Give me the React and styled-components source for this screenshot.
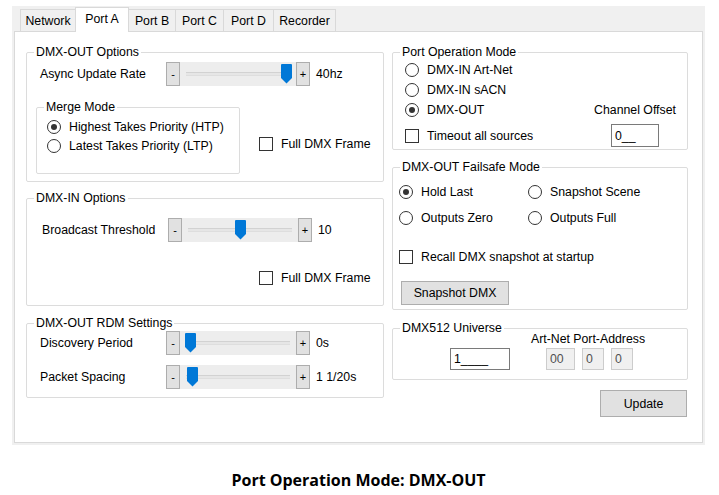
import React from 'react';
import styled, { createGlobalStyle } from 'styled-components';

const UI_FONT = '"Liberation Sans", Arial, sans-serif';
const GROUP_BORDER = '#dcdcdc';

const GlobalStyle = createGlobalStyle`
  body {
    margin: 0;
    background: #fff;
    font-family: ${UI_FONT};
  }
`;

const Root = styled.div`
  width: 719px;
  height: 495px;
  padding: 6px 0 0 12px;
  box-sizing: border-box;
  overflow: hidden;
`;

const Window = styled.div`
  width: 693px;
  height: 439px;
  background: #f0f0f0;
  padding: 0 2px 2px 2px;
  box-sizing: border-box;
  display: flex;
  flex-direction: column;
  font-size: 12.3px;
  color: #000;
`;

const TabStrip = styled.div`
  height: 25px;
  display: flex;
  align-items: flex-end;
  padding-left: 6px;
`;

const Tab = styled.div`
  width: ${(p) => p.$w}px;
  height: ${(p) => (p.$active ? 25 : 22)}px;
  box-sizing: border-box;
  padding-bottom: ${(p) => (p.$active ? 2 : 0)}px;
  margin-left: ${(p) => (p.$first ? 0 : -1)}px;
  margin-bottom: ${(p) => (p.$active ? -1 : 0)}px;
  display: flex;
  align-items: center;
  justify-content: center;
  background: ${(p) => (p.$active ? '#fff' : '#f0f0f0')};
  border: 1px solid #d9d9d9;
  border-bottom: none;
  position: relative;
  z-index: ${(p) => (p.$active ? 2 : 1)};
  white-space: nowrap;
`;

const TabPage = styled.div`
  flex: 1;
  background: #fff;
  border: 1px solid #d9d9d9;
  padding: 13px 0 0 11px;
  display: grid;
  grid-template-columns: 358px 296px;
  column-gap: 8px;
  align-items: start;
`;

const Column = styled.div`
  display: flex;
  flex-direction: column;
`;

const GroupBox = styled.fieldset`
  margin: ${(p) => p.$mt || 0}px 0 0 ${(p) => p.$ml || 0}px;
  padding: 0;
  min-width: 0;
  width: ${(p) => (p.$w ? `${p.$w}px` : 'auto')};
  height: ${(p) => p.$h}px;
  box-sizing: border-box;
  border: 1px solid ${GROUP_BORDER};
  border-radius: 2px;
`;

const Legend = styled.legend`
  margin-left: 7px;
  padding: 0 2px;
  line-height: 14px;
`;

const SliderRow = styled.div`
  display: flex;
  align-items: center;
  height: 24px;
  margin-top: ${(p) => p.$mt}px;
  padding-left: ${(p) => p.$pl}px;
`;

const RowLabel = styled.span`
  width: 126px;
  white-space: nowrap;
`;

const SliderBox = styled.div`
  display: flex;
  width: 144px;
  height: 24px;
`;

const StepButton = styled.div`
  width: 14px;
  box-sizing: border-box;
  border: 1px solid #adadad;
  background: #e1e1e1;
  display: flex;
  align-items: center;
  justify-content: center;
  font-size: 11px;
`;

const Track = styled.div`
  flex: 1;
  background: #ededed;
  position: relative;
  display: flex;
  align-items: center;
`;

const Groove = styled.div`
  flex: 1;
  margin: 0 6px;
  height: 2px;
  border-top: 1px solid #d2d2d2;
  border-bottom: 1px solid #dedede;
  background: #e6e6e6;
`;

const ThumbMark = styled.svg`
  position: absolute;
  top: 2px;
`;

const ValueText = styled.span`
  margin-left: 6px;
  white-space: nowrap;
`;

const OptionRow = styled.div`
  display: flex;
  align-items: center;
  height: ${(p) => p.$h || 20}px;
  margin-top: ${(p) => p.$mt || 0}px;
  margin-left: ${(p) => p.$ml || 0}px;
  white-space: nowrap;
`;

const RadioCircle = styled.span`
  width: 14px;
  height: 14px;
  flex: none;
  box-sizing: border-box;
  border: 1px solid #333;
  border-radius: 50%;
  background: #fff;
  margin-right: 8px;
  display: flex;
  align-items: center;
  justify-content: center;

  &::after {
    content: '';
    width: 6px;
    height: 6px;
    border-radius: 50%;
    background: ${(p) => (p.$checked ? '#333' : 'transparent')};
  }
`;

const CheckSquare = styled.span`
  width: 14px;
  height: 14px;
  flex: none;
  box-sizing: border-box;
  border: 1px solid #333;
  background: #fff;
  margin-right: 8px;
`;

const MergeRow = styled.div`
  display: flex;
  align-items: flex-start;
  margin-top: 14px;
  padding-left: 9px;
`;

const MergeContent = styled.div`
  padding: 3px 0 0 10px;
`;

const SplitRow = styled.div`
  display: flex;
  justify-content: space-between;
  align-items: ${(p) => p.$align || 'center'};
  height: ${(p) => p.$h}px;
  margin-top: ${(p) => p.$mt || 0}px;
`;

const PortOpContent = styled.div`
  padding: 1px 11px 0 12px;
`;

const OffsetLabel = styled.span`
  width: 82px;
  text-align: center;
  line-height: 14px;
  white-space: nowrap;
`;

const OffsetCell = styled.div`
  width: 82px;
  display: flex;
  justify-content: center;
`;

const TextBox = styled.div`
  width: ${(p) => p.$w}px;
  height: ${(p) => p.$h || 22}px;
  box-sizing: border-box;
  border: 1px solid ${(p) => (p.$disabled ? '#cccccc' : '#7a7a7a')};
  background: ${(p) => (p.$disabled ? '#f0f0f0' : '#fff')};
  color: ${(p) => (p.$disabled ? '#505050' : '#000')};
  padding-left: 3px;
  display: flex;
  align-items: center;
  margin-left: ${(p) => p.$ml || 0}px;
  white-space: nowrap;
`;

const FailsafeGrid = styled.div`
  display: grid;
  grid-template-columns: 129px auto;
  row-gap: 6px;
  padding-left: 6px;
  margin-top: 8px;
`;

const PushButton = styled.div`
  width: ${(p) => p.$w}px;
  height: ${(p) => p.$h}px;
  box-sizing: border-box;
  border: 1px solid #adadad;
  background: #e1e1e1;
  display: flex;
  align-items: center;
  justify-content: center;
  margin-top: ${(p) => p.$mt || 0}px;
  margin-left: ${(p) => p.$ml || 0}px;
  align-self: ${(p) => p.$self || 'auto'};
  margin-right: ${(p) => p.$mr || 0}px;
`;

const UniverseRow = styled.div`
  display: flex;
  align-items: flex-end;
  margin-top: -3px;
  padding-left: 57px;
`;

const AddressBlock = styled.div`
  width: 110px;
  margin-left: 23px;
  display: flex;
  flex-direction: column;
  align-items: center;
`;

const AddressLabel = styled.span`
  line-height: 14px;
  white-space: nowrap;
`;

const AddressBoxes = styled.div`
  display: flex;
  gap: 7px;
  margin-top: 2px;
  margin-left: 3px;
`;

const Caption = styled.div`
  margin-top: 25px;
  width: 693px;
  text-align: center;
  font-family: "Open Sans", "Noto Sans", sans-serif;
  font-weight: 700;
  font-size: 16px;
  line-height: 20px;
  color: #000;
`;

const Slider = ({ pos }) => (
  <SliderBox>
    <StepButton>-</StepButton>
    <Track>
      <Groove />
      <ThumbMark width="11" height="20" viewBox="0 0 11 20" style={{ left: pos - 5.5 }}>
        <path d="M0 1 Q0 0 1 0 H10 Q11 0 11 1 V14 L5.5 19.5 L0 14 Z" fill="#0078d7" />
      </ThumbMark>
    </Track>
    <StepButton>+</StepButton>
  </SliderBox>
);

const Radio = ({ checked, children, ...rest }) => (
  <OptionRow {...rest}>
    <RadioCircle $checked={checked} />
    {children}
  </OptionRow>
);

const Check = ({ children, ...rest }) => (
  <OptionRow $h={16} {...rest}>
    <CheckSquare />
    {children}
  </OptionRow>
);

const tabs = [
  { name: 'Network', w: 56 },
  { name: 'Port A', w: 54 },
  { name: 'Port B', w: 48 },
  { name: 'Port C', w: 49 },
  { name: 'Port D', w: 51 },
  { name: 'Recorder', w: 63 },
];

const App = () => (
  <Root>
    <GlobalStyle />
    <Window>
      <TabStrip>
        {tabs.map((t, i) => (
          <Tab key={t.name} $w={t.w} $first={i === 0} $active={t.name === 'Port A'}>
            {t.name}
          </Tab>
        ))}
      </TabStrip>
      <TabPage>
        <Column>
          <GroupBox $h={137}>
            <Legend>DMX-OUT Options</Legend>
            <SliderRow $mt={3} $pl={13}>
              <RowLabel>Async Update Rate</RowLabel>
              <Slider pos={106} />
              <ValueText>40hz</ValueText>
            </SliderRow>
            <MergeRow>
              <GroupBox $w={204} $h={74}>
                <Legend>Merge Mode</Legend>
                <MergeContent>
                  <Radio checked $h={19}>Highest Takes Priority (HTP)</Radio>
                  <Radio $h={19}>Latest Takes Priority (LTP)</Radio>
                </MergeContent>
              </GroupBox>
              <Check $mt={36} $ml={19}>Full DMX Frame</Check>
            </MergeRow>
          </GroupBox>

          <GroupBox $h={115} $mt={9}>
            <Legend>DMX-IN Options</Legend>
            <SliderRow $mt={13} $pl={15}>
              <RowLabel>Broadcast Threshold</RowLabel>
              <Slider pos={58} />
              <ValueText>10</ValueText>
            </SliderRow>
            <Check $mt={28} $ml={232}>Full DMX Frame</Check>
          </GroupBox>

          <GroupBox $h={82} $mt={10}>
            <Legend>DMX-OUT RDM Settings</Legend>
            <SliderRow $mt={1} $pl={13}>
              <RowLabel>Discovery Period</RowLabel>
              <Slider pos={10} />
              <ValueText>0s</ValueText>
            </SliderRow>
            <SliderRow $mt={10} $pl={13}>
              <RowLabel>Packet Spacing</RowLabel>
              <Slider pos={12} />
              <ValueText>1 1/20s</ValueText>
            </SliderRow>
          </GroupBox>
        </Column>

        <Column>
          <GroupBox $h={105}>
            <Legend>Port Operation Mode</Legend>
            <PortOpContent>
              <Radio>DMX-IN Art-Net</Radio>
              <Radio>DMX-IN sACN</Radio>
              <SplitRow $h={20}>
                <Radio checked>DMX-OUT</Radio>
                <OffsetLabel>Channel Offset</OffsetLabel>
              </SplitRow>
              <SplitRow $h={23} $mt={4}>
                <Check>Timeout all sources</Check>
                <OffsetCell>
                  <TextBox $w={48} $h={23}>0__</TextBox>
                </OffsetCell>
              </SplitRow>
            </PortOpContent>
          </GroupBox>

          <GroupBox $h={150} $mt={10}>
            <Legend>DMX-OUT Failsafe Mode</Legend>
            <FailsafeGrid>
              <Radio checked>Hold Last</Radio>
              <Radio>Snapshot Scene</Radio>
              <Radio>Outputs Zero</Radio>
              <Radio>Outputs Full</Radio>
            </FailsafeGrid>
            <Check $mt={21} $ml={6}>Recall DMX snapshot at startup</Check>
            <PushButton $w={108} $h={24} $mt={16} $ml={8}>Snapshot DMX</PushButton>
          </GroupBox>

          <GroupBox $h={59} $mt={11}>
            <Legend>DMX512 Universe</Legend>
            <UniverseRow>
              <TextBox $w={60}>1____</TextBox>
              <AddressBlock>
                <AddressLabel>Art-Net Port-Address</AddressLabel>
                <AddressBoxes>
                  <TextBox $w={29} $disabled>00</TextBox>
                  <TextBox $w={22} $disabled>0</TextBox>
                  <TextBox $w={22} $disabled>0</TextBox>
                </AddressBoxes>
              </AddressBlock>
            </UniverseRow>
          </GroupBox>

          <PushButton $w={87} $h={27} $mt={10} $self="flex-end" $mr={1}>
            Update
          </PushButton>
        </Column>
      </TabPage>
    </Window>
    <Caption>Port Operation Mode: DMX-OUT</Caption>
  </Root>
);

export default App;
